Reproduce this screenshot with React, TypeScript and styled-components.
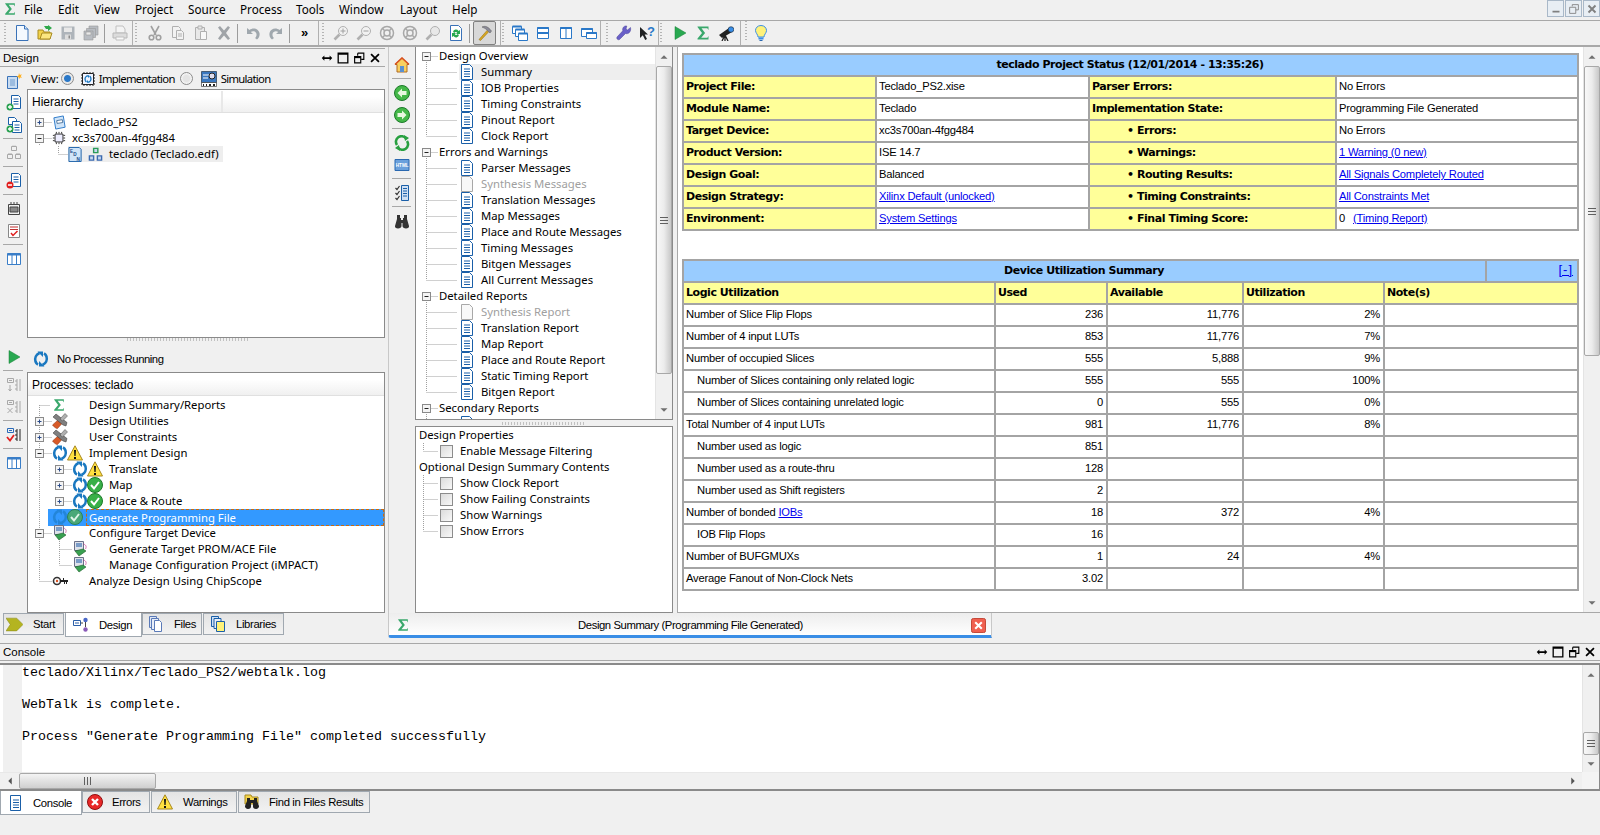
import React from "react";
import styled, { createGlobalStyle } from "styled-components";

const UI = `"Noto Sans", Tahoma, sans-serif`;
const FINE = `"Liberation Sans", Arial, sans-serif`;
const GRIP = `repeating-linear-gradient(to bottom, #b4b4b4 0 1px, transparent 1px 3px)`;

const Global = createGlobalStyle`
  html, body { margin: 0; padding: 0; background: #f0f0f0; overflow: hidden; }
  #root { width: 1600px; height: 835px; }
  * { box-sizing: border-box; }
`;

const Frame = styled.div`
  width: 1600px; height: 835px; display: flex; flex-direction: column;
  background: #f0f0f0; color: #000; font: 11.3px/16px ${UI}; overflow: hidden;
`;
const MenuBar = styled.div`
  height: 21px; flex: none; display: flex; align-items: center; border-bottom: 1px solid #a8a8a8; padding-left: 3px; padding-bottom: 2px;
`;
const LogoSlot = styled.span`display: flex; width: 21px;`;
const MenuItem = styled.span<{ $w: number }>`width: ${p => p.$w}px; font-size: 11.7px;`;
const WinButtons = styled.div`margin-left: auto; display: flex; gap: 1px; padding-right: 0; align-self: flex-start;`;
const WinBtn = styled.div`
  width: 17px; height: 17px; border: 1px solid #a9b8c8; background: #e8eef4; display: flex; align-items: center; justify-content: center; color: #707070;
`;
const ToolBar = styled.div`
  height: 26px; flex: none; display: flex; border-bottom: 2px solid #a8a8a8;
`;
const ToolGroup = styled.div<{ $w: number }>`
  width: ${p => p.$w}px; flex: none; display: flex; align-items: center; border-right: 1px solid #b0b0b0;
`;
const Grip = styled.div<{ $ml: number; $mr: number }>`
  width: 2px; height: 20px; margin: 0 ${p => p.$mr}px 0 ${p => p.$ml}px; background: ${GRIP};
`;
const ToolBtn = styled.div<{ $on?: boolean }>`
  width: 23px; height: 24px; flex: none; display: flex; align-items: center; justify-content: center;
  ${p => p.$on && `border: 1px solid #808080; border-radius: 2px; background: #d8d8d8;`}
`;
const ToolSep = styled.div<{ $l?: number; $r?: number }>`
  width: 1px; height: 19px; flex: none; background: #9c9c9c; margin: 0 ${p => p.$r ?? 3}px 0 ${p => p.$l ?? 2}px;
`;
const Chevrons = styled.span`width: 23px; text-align: center; font: bold 13px/16px "Liberation Sans", sans-serif; flex: none;`;

const Work = styled.div`height: 596px; flex: none; display: flex;`;
const LeftColumn = styled.div`width: 385px; flex: none; display: flex; flex-direction: column; padding-top: 1px;`;
const TitleBar = styled.div`
  height: 19px; flex: none; display: flex; align-items: center; justify-content: space-between;
  border-top: 1px solid #a8a8a8; border-bottom: 1px solid #a8a8a8; padding: 0 3px 0 3px; font: 11.5px/16px ${FINE};
`;
const Controls = styled.div`display: flex; gap: 2px; align-items: center; padding-right: 0;`;
const Dock = styled.div<{ $h: number }>`height: ${p => p.$h}px; flex: none; display: flex;`;
const Strip = styled.div<{ $top?: number; $border?: boolean }>`
  width: 27px; flex: none; display: flex; flex-direction: column; align-items: stretch; padding-top: ${p => p.$top ?? 0}px;
  ${p => p.$border && `border-left: 1px solid #c8c8c8;`}
`;
const StripBtn = styled.div`height: 22px; flex: none; display: flex; align-items: center; justify-content: center;`;
const StripSep = styled.div`height: 1px; flex: none; background: #a8a8a8; margin: 2px 4px 3px 3px;`;
const DockBody = styled.div`flex: 1; min-width: 0; display: flex; flex-direction: column;`;
const ViewRow = styled.div`height: 22px; flex: none; display: flex; align-items: center; padding: 1px 0 0 4px;`;
const ViewText = styled.span<{ $ml?: number; $tight?: boolean }>`
  margin-left: ${p => p.$ml ?? 0}px; ${p => p.$tight && `letter-spacing: -0.7px;`}
`;
const Radio = styled.span<{ $on?: boolean }>`
  width: 13px; height: 13px; border-radius: 50%; flex: none; border: 1px solid #8c8c8c;
  background: ${p => (p.$on ? "radial-gradient(circle, #2a78c8 0 3px, #e8e8e8 4px)" : "radial-gradient(circle, #e4e4e4 0 3px, #f4f4f4 5px)")};
`;
const Pane = styled.div`
  flex: 1; min-height: 0; background: #fff; border: 1px solid #8a8a8a; overflow: hidden; position: relative;
`;
const Header = styled.div`
  height: 23px; display: flex; align-items: center; background: linear-gradient(#fff 0 30%, #f0f0f0); border-bottom: 1px solid #e0e0e0; padding: 1px 0 0 4px; font: 12px/16px ${FINE};
`;
const HeaderCol = styled.div`width: 191px; height: 100%; display: flex; align-items: center; border-right: 2px solid #e8e8e8;`;
const Rows = styled.div<{ $top?: number }>`padding-top: ${p => p.$top ?? 2}px;`;
const Row = styled.div<{ $tone?: string }>`height: 16px; display: flex; align-items: center; white-space: nowrap; color: ${p => p.$tone ?? "#000"};`;
const Slot = styled.span<{ $w: number }>`width: ${p => p.$w}px; flex: none; display: flex; align-items: center;`;
const LightBand = styled.div<{ $w?: number }>`
  display: flex; align-items: center; height: 16px; background: #eeeeee; ${p => (p.$w ? `width: ${p.$w}px;` : `flex: 1;`)}
`;
const SelBand = styled.div`display: flex; align-items: center; height: 17px; flex: 1; background: #3399ff; color: #fff;`;
const FocusLabel = styled.span`flex: 1; outline: 1px dashed #c86a10; outline-offset: -1px; line-height: 17px; height: 17px; padding-left: 3px;`;
const Splitter = styled.div`
  height: 8px; flex: none; display: flex; justify-content: center; align-items: flex-start;
`;
const SplitDots = styled.div`
  width: 122px; height: 3px; margin-right: 10px; background: repeating-linear-gradient(to right, #c0c0c0 0 1px, transparent 1px 3px);
`;
const ProcBar = styled.div`height: 26px; flex: none; display: flex; align-items: center; padding-left: 6px; gap: 8px; font: 11.3px/16px ${FINE}; letter-spacing: -0.45px;`;
const Tabs = styled.div<{ $h?: number; $pl?: number }>`
  display: flex; height: ${p => p.$h ?? 24}px; flex: none; align-items: flex-start; padding-left: ${p => p.$pl ?? 0}px;
`;
const Tab = styled.div<{ $on?: boolean; $w: number; $pad: number; $gap: number }>`
  width: ${p => p.$w}px; flex: none; display: flex; align-items: center; gap: ${p => p.$gap}px; padding-left: ${p => p.$pad}px; white-space: nowrap;
  font: 11.3px/16px ${FINE}; letter-spacing: -0.35px;
  height: ${p => (p.$on ? "100%" : "calc(100% - 2px)")};
  border: 1px solid #a0a8b0; border-top: ${p => (p.$on ? "none" : "1px solid #a0a8b0")};
  background: ${p => (p.$on ? "#fff" : "linear-gradient(#e4e4e4, #f2f2f2)")};
  margin-right: ${p => (p.$on ? 0 : 1)}px;
`;
const RightColumn = styled.div`flex: 1; min-width: 0; display: flex; flex-direction: column; padding-left: 3px;`;
const TopRow = styled.div`height: 566px; flex: none; display: flex;`;
const MidColumn = styled.div`width: 258px; flex: none; display: flex; flex-direction: column;`;
const TreePane = styled.div`
  height: 373px; flex: none; background: #fff; border: 1px solid #8a8a8a; border-top: none; display: flex; overflow: hidden;
`;
const TreeBody = styled.div`flex: 1; min-width: 0; overflow: hidden;`;
const MidGrip = styled.div`height: 6px; flex: none; display: flex; justify-content: center; align-items: center;`;
const MidDots = styled.div`width: 84px; height: 3px; background: repeating-linear-gradient(to right, #c0c0c0 0 1px, transparent 1px 3px);`;
const PropsPane = styled.div`flex: 1; background: #fff; border: 1px solid #8a8a8a;`;
const MainPane = styled.div`
  margin-left: 4px; flex: 1; min-width: 0; background: #fff; border-left: 1px solid #a8a8a8; border-bottom: 1px solid #a8a8a8; display: flex;
`;
const MainBody = styled.div`flex: 1; min-width: 0; padding: 6px 0 0 4px;`;
const EditorTab = styled.div`
  width: 604px; height: 25px; flex: none; display: flex; align-items: center; border: 1px solid #c8c8c8; border-top: none; border-bottom: 3px solid #3a8ee6;
  background: linear-gradient(#ededed, #fff); padding: 2px 5px 0 7px; border-radius: 0 0 0 3px;
`;
const EditorLabel = styled.span`flex: 1; text-align: center; font: 11.3px/16px ${FINE}; letter-spacing: -0.42px;`;
const Scroll = styled.div`
  width: 17px; flex: none; background: #f0f0f0; display: flex; flex-direction: column; border-left: 1px solid #e4e4e4; min-height: 0; overflow: hidden;
`;
const Arrow = styled.div<{ $end?: boolean }>`
  height: 18px; flex: none; display: flex; align-items: center; justify-content: center; ${p => p.$end && `margin-top: auto;`}
`;
const Thumb = styled.div<{ $mt: number; $h: number }>`
  height: ${p => p.$h}px; margin-top: ${p => p.$mt}px; flex: none; display: flex; align-items: center; justify-content: center;
  border: 1px solid #a8a8a8; border-radius: 2px; background: linear-gradient(to right, #f8f8f8, #ececec 50%, #c8c8c8);
`;
const Lines = styled.div`
  width: 8px; height: 7px; border-top: 1px solid #606060; border-bottom: 1px solid #606060;
  background: linear-gradient(#606060, #606060) center/100% 1px no-repeat;
`;

const Table = styled.table<{ $mt?: number }>`
  width: 895px; table-layout: fixed; border-collapse: collapse; margin-top: ${p => p.$mt ?? 0}px; border: 2px solid #8c8c8c; font: 11.2px/16px ${FINE}; letter-spacing: -0.2px;
`;
const Tr = styled.tr`height: 22px;`;
const Cell = styled.td<{ $bg?: string; $b?: boolean; $align?: string; $pad?: number; $rp?: number }>`
  border: 2px solid #a4a4a4; padding: 0 ${p => p.$rp ?? 3}px ${p => (p.$b ? 0 : 2)}px ${p => p.$pad ?? 2}px; white-space: nowrap; overflow: hidden;
  background: ${p => p.$bg ?? "#fff"}; text-align: ${p => p.$align ?? "left"};
  ${p => p.$b && `font-family: "DejaVu Sans", sans-serif; font-weight: bold; font-size: 11px; letter-spacing: -0.45px;`}
`;
const Link = styled.a`color: #0000ee; text-decoration: underline;`;
const TimingLink = styled(Link)`margin-left: 8px;`;
const FoldLink = styled(Link)`font-size: 13px; letter-spacing: 1px;`;

const ConsoleTitle = styled(TitleBar)`height: 18px;`;
const ConsoleBox = styled.div`
  height: 128px; flex: none; margin-top: 2px; border-top: 2px solid #8a8a8a; border-bottom: 2px solid #8a8a8a; border-right: 1px solid #8a8a8a;
  display: grid; grid-template-columns: 1fr 17px; grid-template-rows: minmax(0, 1fr) 17px; background: #fff;
`;
const ConsoleMain = styled.div`display: flex; min-width: 0; padding-left: 3px;`;
const Gutter = styled.div`width: 19px; flex: none; background: #f0f0f0;`;
const Pre = styled.pre`margin: 0; font: 13.33px/16px "Liberation Mono", monospace; color: #000;`;
const HScroll = styled.div`display: flex; align-items: stretch; background: #f0f0f0; border-top: 1px solid #e8e8e8;`;
const HArrow = styled.div<{ $end?: boolean }>`width: 19px; display: flex; align-items: center; justify-content: center; ${p => p.$end && `margin-left: auto;`}`;
const HThumb = styled.div`
  width: 137px; display: flex; align-items: center; justify-content: center; border: 1px solid #a8a8a8; border-radius: 2px;
  background: linear-gradient(#f4f4f4, #cfcfcf);
`;
const VLines = styled.div`
  width: 7px; height: 8px; border-left: 1px solid #606060; border-right: 1px solid #606060;
  background: linear-gradient(#606060, #606060) center/1px 100% no-repeat;
`;
const Corner = styled.div`background: #f4f4f4;`;
const Glyph = styled.svg<{ $s: number }>`width: ${p => p.$s}px; height: ${p => p.$s}px; flex: none; display: block;`;
const GuideSvg = styled.svg`flex: none; display: block;`;
const Check = styled.span`
  width: 13px; height: 13px; flex: none; border: 1px solid #8c8c8c; background: linear-gradient(135deg, #dcdcdc, #f8f8f8);
`;

const docLines = <path d="M5 5h6M5 7.5h6M5 10h6M5 12.5h6" stroke="#1a5fa8" />;
const refreshArrows = (
  <g fill="none" stroke="#1a78c0" strokeWidth="2.600">
    <path d="M6.500 2C3 3.500 1.500 7 2.500 10.500c.5 1.500 1.200 2.500 2.500 3.200" />
    <path d="M9.500 14c3.500-1.500 5-5 4-8.500-.5-1.500-1.200-2.500-2.500-3.200" />
    <path d="M4.500 .5h5.500v5.500zM11.500 15.500H6v-5.500z" fill="#1a78c0" stroke="none" />
  </g>
);
const G: Record<string, React.ReactNode> = {
  sigma: <path d="M2.5 1.5h11v3.5l-1.2-1.8H6.5l3.6 4.8-3.9 4.8h6.2l1.1-1.8v3.5h-11v-1l4.5-5.5-4.5-6z" fill="#3aa86c" />,
  doc: <g><path d="M2.5.5h8l3 3v12h-11z" fill="#fff" stroke="#1a5fa8" />{docLines}</g>,
  docOff: <path d="M2.5.5h8l3 3v12h-11z" fill="#f8f8f8" stroke="#a8a8a8" />,
  newFile: <g><path d="M2.5.5h8l3.5 3.5v11.5H2.5z" fill="#f4f9ff" stroke="#3a72b8" /><path d="M10.5.5V4H14" fill="#d8e8f8" stroke="#3a72b8" /></g>,
  open: <g><path d="M1 5h5l1 2h6v7H1z" fill="#f2d24a" stroke="#a88a20" /><path d="M3 14l2-6h10l-2 6z" fill="#fbe680" stroke="#a88a20" /><path d="M7 1h4V0l4 3-4 3V4H9z" fill="#2fa84a" /></g>,
  save: <g fill="#aeb4ba"><path d="M1.5 1.5h13v13h-13z" /><path d="M4 2.5h8v4.5H4z" fill="#e8e8e8" /><path d="M5 9.5h6v5H5z" fill="#dcdcdc" /><path d="M8.5 10.5h1.5v3H8.5z" fill="#8a8a8a" /></g>,
  saveAll: <g fill="#b8bcc2" stroke="#989898" strokeWidth=".6"><path d="M6 1h9v9H6z" /><path d="M3.5 3.500h9v9h-9z" /><path d="M1 6h9v9H1z" /><path d="M3 7h5v3H3z" fill="#e8e8e8" /></g>,
  print: <g><path d="M4 1h7l2 3v4H4z" fill="#f4f4f4" stroke="#c0c0c0" /><path d="M1 8h14v5H1z" fill="#dcdcdc" stroke="#b8b8b8" /><path d="M4 12h8v3H4z" fill="#f8f8f8" stroke="#c0c0c0" /></g>,
  cut: <g fill="none" stroke="#a0a0a0" strokeWidth="1.600"><path d="M4 1l5 9M12 1L7 10" /><circle cx="4.500" cy="12.500" r="2.300" /><circle cx="11.500" cy="12.500" r="2.300" /></g>,
  copy: <g fill="#f2f2f2" stroke="#b0b0b0"><path d="M2.5 1.500h6l2 2v9h-8z" /><path d="M6.500 5.500h5l2 2v7h-7z" /><path d="M8 9h4M8 11h4" /></g>,
  paste: <g fill="#e8e8e8" stroke="#b0b0b0"><path d="M2.500 2.500h9v12h-9z" /><path d="M5 1h4v3H5z" /><path d="M7.500 6.500h6v8h-6z" fill="#f8f8f8" /></g>,
  del: <path d="M2 2.500L4 1l4 4.500L12 1l2 1.500L10 8l4 5.500-2 1.500-4-4.500L4 15l-2-1.500L6 8z" fill="#a0a4a8" />,
  undo: <path d="M2 3v6h6L5.800 7C7.500 5.500 11 6 11.500 9c.2 1.500-.3 3-1.500 4l2 1.500c2-1.500 3-4 2.500-6.500C13.500 3.500 8 2 4.500 5z" fill="#a0a8ae" />,
  redo: <path d="M14 3v6H8l2.200-2C8.500 5.500 5 6 4.500 9c-.2 1.500.3 3 1.500 4L4 14.500C2 13 1 10.500 1.500 8 2.500 3.500 8 2 11.500 5z" fill="#a0a8ae" />,
  zoomIn: <g><path d="M1.500 14.500L6.500 9.500" stroke="#b0b0b0" strokeWidth="2.600" /><circle cx="10" cy="6" r="4.500" fill="#f2f2f2" stroke="#b0b0b0" /><path d="M10 3.500v5M7.500 6h5" stroke="#a0a0a0" /></g>,
  zoomOut: <g><path d="M1.500 14.500L6.500 9.500" stroke="#b0b0b0" strokeWidth="2.600" /><circle cx="10" cy="6" r="4.500" fill="#f2f2f2" stroke="#b0b0b0" /><path d="M7.500 6h5" stroke="#a0a0a0" /></g>,
  ring: <g fill="none" stroke="#a8a8a8"><circle cx="8" cy="8" r="6.500" strokeWidth="1.500" /><circle cx="8" cy="8" r="3" strokeWidth="1.500" /><path d="M3.500 3.500l2.500 2.500M12.500 3.500L10 6M3.500 12.500L6 10M12.500 12.500L10 10" strokeWidth="1.500" /></g>,
  zoomPlain: <g><path d="M1.500 14.500L6.500 9.500" stroke="#b0b0b0" strokeWidth="2.600" /><circle cx="10" cy="6" r="4.500" fill="#e8e8e8" stroke="#b0b0b0" /></g>,
  refreshDoc: <g><path d="M2.500.5h8l3 3v12h-11z" fill="#fff" stroke="#3a72b8" /><path d="M5 7a3 3 0 0 1 5.500-1L12 5v4H8l1.200-1.200A1.500 1.500 0 0 0 6.500 8z" fill="#28a850" /><path d="M11 10a3 3 0 0 1-5.500 1L4 12V8h4L6.800 9.200A1.500 1.500 0 0 0 9.500 9z" fill="#28a850" /></g>,
  hammer: <g><path d="M2 14.500L10 5.500l1.500 1.500-8 8.500z" fill="#d8a820" stroke="#98741a" strokeWidth=".6" /><path d="M5 2c3-1.500 6-.5 9.500 4L13 8 10 5C8.500 3.500 7 3 5 2z" fill="#8a8a98" stroke="#666" strokeWidth=".6" /></g>,
  win1: <g fill="#fff" stroke="#2a78c8"><path d="M.5 1.500h9v7h-9z" /><path d="M3.500 4.500h9v7h-9z" /><path d="M6.500 8.500h9v7h-9z" /><path d="M.5 1.500h9M3.500 4.500h9M6.500 8.500h9" strokeWidth="2" /></g>,
  win2: <g fill="#fff" stroke="#2a78c8"><path d="M2.500 2.500h11v11h-11z" /><path d="M2.500 3h11M2.500 8h11" strokeWidth="2" /></g>,
  win3: <g fill="#fff" stroke="#2a78c8"><path d="M2.500 2.500h11v11h-11z" /><path d="M2.500 3h11" strokeWidth="2" /><path d="M8 3v10" /></g>,
  win4: <g fill="#fff" stroke="#2a78c8"><path d="M.5 3.500h11v8H.5z" /><path d="M.5 4h11" strokeWidth="2" /><path d="M5.500 7.500h10v6h-10z" /><path d="M5.500 8h10" strokeWidth="2" /></g>,
  wrench: <path d="M14.500 2.500L11.500 5l-1.500-1 .8-3C8 .5 6 3 6.800 5.800L1 12c-1 1.500 1 3.500 2.500 2.500L9.500 8.500C12.500 9.500 15.500 6.500 14.500 2.500z" fill="#6a60c8" stroke="#4a4498" strokeWidth=".5" />,
  help: <g><path d="M1 2v11l2.800-2.800 2.400 4.800 1.800-1-2.300-4.500H9z" fill="#222" /><text x="8" y="10.500" fontSize="13" fontWeight="bold" fill="#2a78c8" fontFamily="Liberation Sans">?</text></g>,
  play: <path d="M3 1.500l11 6.500-11 6.500z" fill="#28a850" stroke="#1a8038" strokeWidth=".5" />,
  scope: <g><path d="M1 10L11 3l3 4L4 13z" fill="#222" /><circle cx="13" cy="4.500" r="2.800" fill="#3a8ee6" stroke="#123" strokeWidth=".6" /><path d="M7 10l-3 6M7 10l3 6M7 10v6" stroke="#222" strokeWidth="1.300" /></g>,
  bulb: <g><path d="M8 .5c3.500 0 5.500 2.500 5.500 5 0 2.500-2.500 4-2.500 6.500H5C5 9.500 2.500 8 2.500 5.500 2.500 3 4.500.5 8 .5z" fill="#fff27a" stroke="#3a8ee6" /><path d="M5.500 12.500h5v2h-5z" fill="#3a8ee6" /><path d="M6.500 15h3v1h-3z" fill="#2a68b0" /></g>,
  refresh: refreshArrows,
  warn: <g><path d="M8 .8L15.500 15H.5z" fill="#ffe040" stroke="#a88820" strokeLinejoin="round" /><path d="M7 5h2l-.4 6H7.400zM7 12h2v2H7z" fill="#111" /></g>,
  ok: <g><circle cx="8" cy="8" r="7.500" fill="#38b048" stroke="#1c7a2a" /><path d="M4 8l3 3.500 5-6.500" fill="none" stroke="#fff" strokeWidth="2" /></g>,
  okDim: <g><circle cx="8" cy="8" r="7.500" fill="#4aa878" stroke="#2a8058" /><path d="M4 8l3 3.500 5-6.500" fill="none" stroke="#e0f4e8" strokeWidth="2" /></g>,
  refreshDim: <g opacity=".6">{refreshArrows}</g>,
  tools: <g><path d="M.5 12l6-5.500 4 3.500-5 5.500c-1 .5-4-2-5-3.500z" fill="#d85a28" stroke="#8a3010" strokeWidth=".5" /><path d="M1 4l3-3 11 8.500-1 3.500-3-1z" fill="#808080" stroke="#333" strokeWidth=".5" /><path d="M8 6l5-5.500 2.500 2.500-5 5z" fill="#b0b0b0" stroke="#444" strokeWidth=".5" /></g>,
  config: <g><path d="M2.500 .5h9v9h-9z" fill="#dfe2ea" stroke="#6a7088" /><path d="M4 2h6v4H4z" fill="#7a9cc8" /><path d="M3 10l4 5 7-5-3-2z" fill="#38a050" stroke="#20602c" strokeWidth=".6" /><path d="M11.500 3c3 1 3 3 2 5" fill="none" stroke="#c83a90" strokeWidth=".7" /></g>,
  key: <g><circle cx="5" cy="8" r="3.500" fill="#fff" stroke="#333" strokeWidth="1.600" /><circle cx="5" cy="8" r="1.200" fill="#d85020" /><path d="M8 7h8v2h-1v2h-1V9h-1v2h-1V9H8zM12 5v2h-1V5z" fill="#222" /></g>,
  chip: <g><path d="M3.500 3.500h9v9h-9z" fill="#eef" stroke="#222" /><path d="M1 5h2M1 8h2M1 11h2M13 5h2M13 8h2M13 11h2M5 1v2M8 1v2M11 1v2M5 13v2M8 13v2M11 13v2" stroke="#222" /></g>,
  chipRefresh: <g><path d="M2.500 2.500h11v11h-11z" fill="#f0f4ff" stroke="#222" /><path d="M1 4h1M1 7h1M1 10h1M1 13h1M14 4h1M14 7h1M14 10h1M14 13h1M4 1v1M7 1v1M10 1v1M13 1v1M4 14v1M7 14v1M10 14v1M13 14v1" stroke="#222" /><g transform="translate(4 4) scale(.5)">{refreshArrows}</g></g>,
  sim: <g><path d="M.5.5h15v11H.5z" fill="#3a78c0" stroke="#123" strokeWidth=".6" /><path d="M2 4h6M2 7h5" stroke="#fff" /><circle cx="11" cy="5" r="3" fill="#dde" stroke="#222" /><path d="M.5 11.500h15v4H.5z" fill="#fff" stroke="#222" strokeWidth=".6" /><path d="M2 13h1v2H2zM5 13h1v2H5zM8 13h2v2H8zM12 13h2v2h-2z" fill="#222" /></g>,
  project: <g><path d="M2 3l10-2 2 12-10 2z" fill="#cfe4f8" stroke="#2a78c8" /><path d="M5 6l6-1 .5 3-6 1z" fill="#fff" stroke="#2a5888" strokeWidth=".8" /></g>,
  edif: <g><path d="M1 .5h11l2 2v13H1z" fill="#cfe4f8" stroke="#1a5fa8" /><text x="2" y="6" fontSize="5" fontWeight="bold" fill="#1a4a88" fontFamily="Liberation Sans">E</text><text x="5.500" y="10" fontSize="5" fontWeight="bold" fill="#1a4a88" fontFamily="Liberation Sans">D</text><text x="9" y="14.500" fontSize="5" fontWeight="bold" fill="#1a4a88" fontFamily="Liberation Sans">N</text></g>,
  blocks: <g fill="#c8d8f0" stroke="#3a6ab0" strokeWidth="1.500"><path d="M6 1.500h4.500V6H6z" stroke="#2a9a58" /><path d="M1.500 9.500H6V14H1.500zM10 9.500h4.500V14H10z" /></g>,
  sparkle: <g><path d="M1.500 3.500h10v12h-10z" fill="#c8dcf2" stroke="#3a72b8" /><path d="M4 6h5v7H4z" fill="#9cbce0" /><path d="M13 0l.8 2 2-.8-1 2 1.200 1.500-2-.2-1 1.800-.4-2-2-.5 1.800-1z" fill="#ffb020" /></g>,
  add1: <g><path d="M5.500.5h7l2 2v11h-9z" fill="#fff" stroke="#1a5fa8" /><path d="M7.500 4h5M7.500 6.500h5M7.500 9h5" stroke="#1a5fa8" /><circle cx="4" cy="12" r="3.500" fill="#28a050" /><path d="M2 12h4M4 10v4" stroke="#fff" strokeWidth="1.300" /></g>,
  add2: <g><path d="M2.500.5h6l2 2v5h-8z" fill="#fff" stroke="#1a5fa8" /><path d="M6.500 4.500h7l2 2v9h-9z" fill="#fff" stroke="#1a5fa8" /><path d="M8.500 8h5M8.500 10.500h5M8.500 13h5" stroke="#1a5fa8" /><circle cx="4" cy="12" r="3.500" fill="#28a050" /><path d="M2 12h4M4 10v4" stroke="#fff" strokeWidth="1.300" /></g>,
  chipsGray: <g fill="none" stroke="#a8a8a8"><path d="M5.500 1.500h5v4h-5zM1.500 9.500h5v4h-5zM9.500 9.500h5v4h-5z" /><path d="M3 8v1.500M5 8v1.500M11 8v1.500M13 8v1.500M7 .5v1M9 .5v1" /></g>,
  remove: <g><path d="M5.500.5h7l2 2v11h-9z" fill="#fff" stroke="#1a5fa8" /><path d="M7.500 4h5M7.500 6.500h5M7.500 9h5" stroke="#1a5fa8" /><circle cx="4" cy="12" r="3.500" fill="#e02020" /><path d="M2 12h4" stroke="#fff" strokeWidth="1.500" /></g>,
  chipDark: <g fill="#eee" stroke="#444"><path d="M2.500 3.500h11v10h-11z" /><path d="M4 6h8v5H4z" fill="#888" /><path d="M5 1v2M8 1v2M11 1v2" /></g>,
  report: <g><path d="M2.500 1.500h11v13h-11z" fill="#fff" stroke="#888" /><path d="M4 4h8M4 6.500h8" stroke="#c03030" /><path d="M5 10l2 2.500L11.500 8" fill="none" stroke="#e02020" strokeWidth="1.500" /></g>,
  table: <g fill="#fff" stroke="#3a7ec8"><path d="M1.500 2.500h13v11h-13z" /><path d="M1.500 3.500h13" strokeWidth="2" /><path d="M6 4v9M10.500 4v9" /></g>,
  procGray1: <g fill="none" stroke="#a8a8a8"><path d="M1.500 1.500h6v4h-6zM3 3.500h3" /><path d="M11 2v12M14 2v12M9 4h2M9 8h2M9 12h2" /><path d="M4 8v6M2.500 12L4 14l1.500-2" /></g>,
  procGray2: <g fill="none" stroke="#a8a8a8"><path d="M1.500 1.500h6v4h-6zM3 3.500h3" /><path d="M11 2v12M14 2v12M9 4h2M9 8h2M9 12h2" /><path d="M1.500 9l5 5M6.500 9l-5 5" /></g>,
  procCheck: <g fill="none"><path d="M1.500 1.500h6v4h-6z" stroke="#2a6ab8" /><path d="M3 3.500h3" stroke="#2a6ab8" /><path d="M11 2v12M14 2v12M9 4h2M9 8h2M9 12h2" stroke="#222" /><path d="M1 10l3 3.500L8 8" stroke="#e02020" strokeWidth="1.800" /></g>,
  home: <g><path d="M8 1L1 7.500h2V15h10V7.500h2z" fill="#f8d060" stroke="#b06a20" /><path d="M1 7.500L8 1l7 6.500" fill="none" stroke="#d85020" strokeWidth="1.600" /><path d="M6 9h4v6H6z" fill="#5a90d0" /></g>,
  greenL: <g><circle cx="8" cy="8" r="7.500" fill="#44b848" stroke="#1c7a2a" /><path d="M8 3.500L3.500 8 8 12.500V10h4.500V6H8z" fill="#e8f8e0" /></g>,
  greenR: <g><circle cx="8" cy="8" r="7.500" fill="#44b848" stroke="#1c7a2a" /><path d="M8 3.500L12.500 8 8 12.500V10H3.500V6H8z" fill="#e8f8e0" /></g>,
  greenRe: <g fill="none" stroke="#28a040" strokeWidth="2.600"><path d="M3 10a5.500 5.500 0 0 1 9-6.500" /><path d="M13 6a5.500 5.500 0 0 1-9 6.500" /><path d="M10 0l5 3-4 3zM6 16l-5-3 4-3z" fill="#28a040" stroke="none" /></g>,
  html: <g><path d="M1 2.500h14v11H1z" fill="#6aa0dc" stroke="#2a68b0" /><text x="1.800" y="10.200" fontSize="4.600" fontWeight="bold" fill="#fff" fontFamily="Liberation Sans">HTML</text></g>,
  list: <g><path d="M1.500 3l1.500 1.500L5.500 1M1.500 8l1.500 1.500L5.500 6M1.500 13l1.500 1.500L5.500 11" fill="none" stroke="#333" strokeWidth="1.200" /><path d="M7.500 .5h7v15h-7z" fill="#cfe0f4" stroke="#1a5fa8" /><path d="M9 3.500h4M9 6h4M9 8.500h4M9 11h4" stroke="#1a5fa8" /></g>,
  binoc: <g fill="#333"><path d="M3 2h3v3h1v2h2V5h1V2h3v4l2 7c.3 1.500-1 2.500-3 2.500s-3.500-1-3.500-2.500V10H7.500v3c0 1.500-1.500 2.500-3.500 2.500S.7 14.500 1 13l2-7z" /></g>,
  find: <g><path d="M1 1h6l1 2h6v7H1z" fill="#f2d24a" stroke="#a88a20" /><path d="M3 4h3v2h4V4h3v3l2 5c.2 1.500-1 3-3 3s-3-1-3-2.500V9H7v3.500C7 14 6 15 4 15s-3.200-1.500-3-3l2-5z" fill="#222" /></g>,
  start: <path d="M0 2h10l6 6-6 6H0l4-6z" fill="#b4b420" stroke="#88881c" strokeWidth=".5" />,
  design: <g><path d="M.5 3.500h7v5h-7z" fill="#fff" stroke="#2a5ea8" /><path d="M2 6h4" stroke="#2a5ea8" /><circle cx="12.500" cy="3" r="2.200" fill="#4a68c8" /><circle cx="12.500" cy="12.500" r="2.200" fill="#8a5ab8" /><path d="M7.500 6h2.500M12.500 5v5" stroke="#444" /></g>,
  files: <g fill="#fff" stroke="#5a7ab8"><path d="M1.500 .5h7v11h-7z" fill="#dde6f4" /><path d="M3.500 2.500h7v11h-7z" fill="#e8eef8" /><path d="M6.500 4.500h5l2 2v9h-7z" /></g>,
  libs: <g stroke="#1a5fa8"><path d="M1.500 .5h7v10h-7z" fill="#cfe0f4" /><path d="M4 2.500h7v10H4z" fill="#e8eef8" /><path d="M6.500 5.500h8v10h-8z" fill="#fff27a" /></g>,
  err: <g><circle cx="8" cy="8" r="7.500" fill="#e82828" stroke="#901010" /><path d="M5 5l6 6M11 5l-6 6" stroke="#fff" strokeWidth="2.400" /></g>,
  consoleDoc: <g><path d="M2.500.5h10v15h-10z" fill="#fff" stroke="#1a5fa8" />{docLines}</g>,
  close: <g><rect x=".5" y=".5" width="15" height="15" rx="2" fill="#f06050" stroke="#c04030" /><path d="M4.500 4.500l7 7M11.500 4.500l-7 7" stroke="#fff" strokeWidth="2.200" /></g>,
  up: <path d="M4 11l4-4 4 4z" fill="#707070" />,
  down: <path d="M4 6h8l-4 4z" fill="#707070" />,
  left: <path d="M10 4v8L6 8z" fill="#555" />,
  right: <path d="M6 4v8l4-4z" fill="#555" />,
  resize: <path d="M2 8l3-3v2h6V5l3 3-3 3V9H5v2z" fill="#000" />,
  max: <path d="M2.500 2.500h11v11h-11z M2.500 3.500h11" fill="none" stroke="#000" strokeWidth="1.500" />,
  restore: <g fill="none" stroke="#000" strokeWidth="1.300"><path d="M6.500 2.500h7v7h-3M6.500 2.500v3" /><path d="M3 6.500h7v7H3z" /><path d="M3 7.500h7" /></g>,
  xMark: <path d="M3.500 3.500l9 9M12.500 3.500l-9 9" stroke="#000" strokeWidth="2" />,
  min: <path d="M4 11h8" stroke="#808080" strokeWidth="2" />,
  winRestore: <g fill="none" stroke="#808080"><path d="M6 3h7v6h-3M6 3v2" /><path d="M3 6h7v7H3z" /></g>,
  winClose: <path d="M4 4l8 8M12 4l-8 8" stroke="#808080" strokeWidth="2.200" />,
};

const Ico = ({ n, s = 16 }: { n: string; s?: number }) => (
  <Glyph $s={s} viewBox="0 0 16 16">{G[n]}</Glyph>
);

type GuideProps = { w: number; through?: number[]; elbow?: number; to?: number; last?: boolean; first?: boolean; box?: "+" | "-"; boxAt?: number; drop?: boolean; h?: number };
const Guide = ({ w, through = [], elbow, to, last, first, box, boxAt, drop, h = 16 }: GuideProps) => {
  const at = boxAt ?? elbow ?? 0;
  return (
    <GuideSvg width={w} height={h} viewBox={`0 0 ${w} ${h}`}>
      <g stroke="#a0a0a0" strokeDasharray="1 1" fill="none">
        {through.map(x => <path key={x} d={`M${x} 0V${h}`} />)}
        {elbow !== undefined && <path d={`M${elbow} ${first ? 8 : 0}V${last ? 8 : h}`} />}
        {elbow !== undefined && to !== undefined && <path d={`M${elbow} 8.500H${to}`} />}
        {drop && <path d={`M${at} 8V${h}`} />}
        {box && to !== undefined && <path d={`M${at} 8.500H${to}`} />}
      </g>
      {box && (
        <g>
          <rect x={at - 4} y="4.500" width="8" height="8" fill="#f4f4f4" stroke="#8a8a8a" />
          <path d={`M${at - 2} 8.500h4`} stroke={box === "-" ? "#222" : "#2a4a88"} />
          {box === "+" && <path d={`M${at} 6.500v4`} stroke="#2a4a88" />}
        </g>
      )}
    </GuideSvg>
  );
};

const menu: [string, number][] = [["File", 34], ["Edit", 36], ["View", 41], ["Project", 53], ["Source", 52], ["Process", 56], ["Tools", 43], ["Window", 61], ["Layout", 52], ["Help", 40]];

const Panel = () => (
  <Controls>
    <Ico n="resize" s={14} /><Ico n="max" s={14} /><Ico n="restore" s={14} /><Ico n="xMark" s={14} />
  </Controls>
);

const treeGroups: { title: string; items: [string, boolean?][] }[] = [
  { title: "Design Overview", items: [["Summary"], ["IOB Properties"], ["Timing Constraints"], ["Pinout Report"], ["Clock Report"]] },
  { title: "Errors and Warnings", items: [["Parser Messages"], ["Synthesis Messages", true], ["Translation Messages"], ["Map Messages"], ["Place and Route Messages"], ["Timing Messages"], ["Bitgen Messages"], ["All Current Messages"]] },
  { title: "Detailed Reports", items: [["Synthesis Report", true], ["Translation Report"], ["Map Report"], ["Place and Route Report"], ["Static Timing Report"], ["Bitgen Report"]] },
  { title: "Secondary Reports", items: [["WebTalk Report"]] },
];

const status: [string, React.ReactNode, string, React.ReactNode, number?][] = [
  ["Project File:", "Teclado_PS2.xise", "Parser Errors:", "No Errors", 2],
  ["Module Name:", "Teclado", "Implementation State:", "Programming File Generated", 2],
  ["Target Device:", "xc3s700an-4fgg484", "• Errors:", "No Errors", 37],
  ["Product Version:", "ISE 14.7", "• Warnings:", <Link>1 Warning (0 new)</Link>, 37],
  ["Design Goal:", "Balanced", "• Routing Results:", <Link>All Signals Completely Routed</Link>, 37],
  ["Design Strategy:", <Link>Xilinx Default (unlocked)</Link>, "• Timing Constraints:", <Link>All Constraints Met</Link>, 37],
  ["Environment:", <Link>System Settings</Link>, "• Final Timing Score:", <>0<TimingLink>(Timing Report)</TimingLink></>, 37],
];

const util: [React.ReactNode, number, string, string, string][] = [
  ["Number of Slice Flip Flops", 2, "236", "11,776", "2%"],
  ["Number of 4 input LUTs", 2, "853", "11,776", "7%"],
  ["Number of occupied Slices", 2, "555", "5,888", "9%"],
  ["Number of Slices containing only related logic", 13, "555", "555", "100%"],
  ["Number of Slices containing unrelated logic", 13, "0", "555", "0%"],
  ["Total Number of 4 input LUTs", 2, "981", "11,776", "8%"],
  ["Number used as logic", 13, "851", "", ""],
  ["Number used as a route-thru", 13, "128", "", ""],
  ["Number used as Shift registers", 13, "2", "", ""],
  [<>Number of bonded <Link>IOBs</Link></>, 2, "18", "372", "4%"],
  ["IOB Flip Flops", 13, "16", "", ""],
  ["Number of BUFGMUXs", 2, "1", "24", "4%"],
  ["Average Fanout of Non-Clock Nets", 2, "3.02", "", ""],
];

const YEL = "#ffff99";
const BLU = "#99ccff";

export default function App() {
  return (
    <Frame>
      <Global />
      <MenuBar>
        <LogoSlot><Ico n="sigma" s={14} /></LogoSlot>
        {menu.map(([m, w]) => <MenuItem key={m} $w={w}>{m}</MenuItem>)}
        <WinButtons>
          <WinBtn><Ico n="min" s={14} /></WinBtn><WinBtn><Ico n="winRestore" s={14} /></WinBtn><WinBtn><Ico n="winClose" s={14} /></WinBtn>
        </WinButtons>
      </MenuBar>
      <ToolBar>
        <ToolGroup $w={133}>
          <Grip $ml={4} $mr={4} />
          {["newFile", "open", "save", "saveAll"].map(n => <ToolBtn key={n}><Ico n={n} /></ToolBtn>)}
          <ToolSep />
          <ToolBtn><Ico n="print" /></ToolBtn>
        </ToolGroup>
        <ToolGroup $w={186}>
          <Grip $ml={2} $mr={6} />
          {["cut", "copy", "paste", "del"].map(n => <ToolBtn key={n}><Ico n={n} /></ToolBtn>)}
          <ToolSep />
          <ToolBtn><Ico n="undo" /></ToolBtn><ToolBtn><Ico n="redo" /></ToolBtn>
          <ToolSep />
          <Chevrons>»</Chevrons>
        </ToolGroup>
        <ToolGroup $w={182}>
          <Grip $ml={3} $mr={5} />
          {["zoomIn", "zoomOut", "ring", "ring", "zoomPlain", "refreshDoc"].map((n, i) => <ToolBtn key={i}><Ico n={n} /></ToolBtn>)}
          <ToolSep />
          <ToolBtn $on><Ico n="hammer" /></ToolBtn>
        </ToolGroup>
        <ToolGroup $w={100}>
          <Grip $ml={1} $mr={4} />
          {["win1", "win2", "win3", "win4"].map(n => <ToolBtn key={n}><Ico n={n} /></ToolBtn>)}
        </ToolGroup>
        <ToolGroup $w={58}>
          <Grip $ml={5} $mr={4} />
          <ToolBtn><Ico n="wrench" /></ToolBtn><ToolBtn><Ico n="help" /></ToolBtn>
        </ToolGroup>
        <ToolGroup $w={82}>
          <Grip $ml={1} $mr={6} />
          {["play", "sigma", "scope"].map(n => <ToolBtn key={n}><Ico n={n} /></ToolBtn>)}
        </ToolGroup>
        <Grip $ml={4} $mr={2} />
        <ToolBtn><Ico n="bulb" /></ToolBtn>
      </ToolBar>
      <Work>
        <LeftColumn>
          <TitleBar>Design<Panel /></TitleBar>
          <Dock $h={271}>
            <Strip $top={3}>
              <StripBtn><Ico n="sparkle" /></StripBtn><StripBtn><Ico n="add1" /></StripBtn><StripBtn><Ico n="add2" /></StripBtn>
              <StripSep />
              <StripBtn><Ico n="chipsGray" /></StripBtn>
              <StripSep />
              <StripBtn><Ico n="remove" /></StripBtn>
              <StripSep />
              <StripBtn><Ico n="chipDark" /></StripBtn><StripBtn><Ico n="report" /></StripBtn>
              <StripSep />
              <StripBtn><Ico n="table" /></StripBtn>
            </Strip>
            <DockBody>
              <ViewRow>
                View:<ViewText $ml={2} /><Radio $on /><ViewText $ml={6} /><Ico n="chipRefresh" /><ViewText $ml={3} $tight>Implementation</ViewText>
                <ViewText $ml={5} /><Radio /><ViewText $ml={8} /><Ico n="sim" /><ViewText $ml={4} $tight>Simulation</ViewText>
              </ViewRow>
              <Pane>
                <Header><HeaderCol>Hierarchy</HeaderCol></Header>
                <Rows $top={1}>
                  <Row><Guide w={24} box="+" boxAt={11.5} to={24} /><Slot $w={21}><Ico n="project" s={15} /></Slot>Teclado_PS2</Row>
                  <Row><Guide w={24} box="-" boxAt={11.5} to={24} drop /><Slot $w={20}><Ico n="chip" s={14} /></Slot>xc3s700an-4fgg484</Row>
                  <Row>
                    <Guide w={40} elbow={30.5} to={40} last />
                    <LightBand $w={155}>
                      <Slot $w={20}><Ico n="edif" s={15} /></Slot><Slot $w={21}><Ico n="blocks" s={15} /></Slot>teclado (Teclado.edf)
                    </LightBand>
                  </Row>
                </Rows>
              </Pane>
            </DockBody>
          </Dock>
          <Splitter><SplitDots /></Splitter>
          <Dock $h={267}>
            <Strip>
              <StripBtn><Ico n="play" /></StripBtn>
              <StripSep />
              <StripBtn><Ico n="procGray1" /></StripBtn><StripBtn><Ico n="procGray2" /></StripBtn>
              <StripSep />
              <StripBtn><Ico n="procCheck" /></StripBtn>
              <StripSep />
              <StripBtn><Ico n="table" /></StripBtn>
            </Strip>
            <DockBody>
              <ProcBar><Ico n="refresh" />No Processes Running</ProcBar>
              <Pane>
                <Header>Processes: teclado</Header>
                <Rows $top={1}>
                  <Row><Guide w={24} elbow={11.5} to={22} first /><Slot $w={37}><Ico n="sigma" s={14} /></Slot>Design Summary/Reports</Row>
                  <Row><Guide w={24} through={[11.5]} box="+" boxAt={11.5} to={24} /><Slot $w={37}><Ico n="tools" /></Slot>Design Utilities</Row>
                  <Row><Guide w={24} through={[11.5]} box="+" boxAt={11.5} to={24} /><Slot $w={37}><Ico n="tools" /></Slot>User Constraints</Row>
                  <Row><Guide w={24} through={[11.5]} box="-" boxAt={11.5} to={24} /><Slot $w={15}><Ico n="refresh" /></Slot><Slot $w={22}><Ico n="warn" /></Slot>Implement Design</Row>
                  {([["Translate", "warn"], ["Map", "ok"], ["Place & Route", "ok"]] as [string, string][]).map(([t, k]) => (
                    <Row key={t}><Guide w={44} through={[11.5]} box="+" boxAt={31.5} to={44} /><Slot $w={15}><Ico n="refresh" /></Slot><Slot $w={22}><Ico n={k} /></Slot>{t}</Row>
                  ))}
                  <Row>
                    <Guide w={20} through={[11.5]} />
                    <SelBand>
                      <Slot $w={4} /><Slot $w={15}><Ico n="refreshDim" /></Slot><Slot $w={19}><Ico n="okDim" /></Slot>
                      <FocusLabel>Generate Programming File</FocusLabel>
                    </SelBand>
                  </Row>
                  <Row><Guide w={24} through={[11.5]} box="-" boxAt={11.5} to={24} /><Slot $w={37}><Ico n="config" /></Slot>Configure Target Device</Row>
                  <Row><Guide w={44} through={[11.5]} elbow={31.5} to={44} /><Slot $w={37}><Ico n="config" /></Slot>Generate Target PROM/ACE File</Row>
                  <Row><Guide w={44} through={[11.5]} elbow={31.5} to={44} last /><Slot $w={37}><Ico n="config" /></Slot>Manage Configuration Project (iMPACT)</Row>
                  <Row><Guide w={24} elbow={11.5} to={24} last /><Slot $w={37}><Ico n="key" /></Slot>Analyze Design Using ChipScope</Row>
                </Rows>
              </Pane>
            </DockBody>
          </Dock>
          <Tabs $pl={3}>
            <Tab $w={61} $pad={2} $gap={10}><Ico n="start" s={17} />Start</Tab>
            <Tab $on $w={77} $pad={7} $gap={10}><Ico n="design" />Design</Tab>
            <Tab $w={60} $pad={5} $gap={10}><Ico n="files" />Files</Tab>
            <Tab $w={81} $pad={6} $gap={10}><Ico n="libs" />Libraries</Tab>
          </Tabs>
        </LeftColumn>
        <RightColumn>
          <TopRow>
            <Strip $top={7} $border>
              <StripBtn><Ico n="home" /></StripBtn>
              <StripSep />
              <StripBtn><Ico n="greenL" /></StripBtn><StripBtn><Ico n="greenR" /></StripBtn>
              <StripSep />
              <StripBtn><Ico n="greenRe" /></StripBtn><StripBtn><Ico n="html" /></StripBtn>
              <StripSep />
              <StripBtn><Ico n="list" /></StripBtn>
              <StripSep />
              <StripBtn><Ico n="binoc" /></StripBtn>
            </Strip>
            <MidColumn>
              <TreePane>
                <TreeBody>
                  <Rows $top={1}>
                    {treeGroups.map(g => (
                      <React.Fragment key={g.title}>
                        <Row><Guide w={23} box="-" boxAt={10.5} to={22} drop />{g.title}</Row>
                        {g.items.map(([t, off], i) => (
                          <Row key={t} $tone={off ? "#a0a0a0" : undefined}>
                            <Guide w={43} elbow={10.5} to={41} last={i === g.items.length - 1} />
                            {t === "Summary" ? (
                              <LightBand><Slot $w={22}><Ico n="doc" /></Slot>{t}</LightBand>
                            ) : (
                              <><Slot $w={22}><Ico n={off ? "docOff" : "doc"} /></Slot>{t}</>
                            )}
                          </Row>
                        ))}
                      </React.Fragment>
                    ))}
                  </Rows>
                </TreeBody>
                <Scroll>
                  <Arrow><Ico n="up" s={14} /></Arrow>
                  <Thumb $mt={1} $h={308}><Lines /></Thumb>
                  <Arrow $end><Ico n="down" s={14} /></Arrow>
                </Scroll>
              </TreePane>
              <MidGrip><MidDots /></MidGrip>
              <PropsPane>
                <Rows $top={0}>
                  <Row><Slot $w={3} />Design Properties</Row>
                  <Row><Guide w={24} elbow={7.5} to={22} last /><Slot $w={20}><Check /></Slot>Enable Message Filtering</Row>
                  <Row><Slot $w={3} />Optional Design Summary Contents</Row>
                  {["Show Clock Report", "Show Failing Constraints", "Show Warnings", "Show Errors"].map((t, i) => (
                    <Row key={t}><Guide w={24} elbow={7.5} to={22} last={i === 3} /><Slot $w={20}><Check /></Slot>{t}</Row>
                  ))}
                </Rows>
              </PropsPane>
            </MidColumn>
            <MainPane>
              <MainBody>
                <Table>
                  <colgroup><col width={193} /><col width={213} /><col width={247} /><col width={242} /></colgroup>
                  <tbody>
                    <Tr><Cell colSpan={4} $bg={BLU} $b $align="center">teclado Project Status (12/01/2014 - 13:35:26)</Cell></Tr>
                    {status.map(([a, b, c, d, pad]) => (
                      <Tr key={a}>
                        <Cell $bg={YEL} $b>{a}</Cell><Cell>{b}</Cell>
                        <Cell $bg={YEL} $b $pad={pad}>{c}</Cell><Cell>{d}</Cell>
                      </Tr>
                    ))}
                  </tbody>
                </Table>
                <Table $mt={28}>
                  <colgroup><col width={312} /><col width={112} /><col width={136} /><col width={141} /><col width={102} /><col width={92} /></colgroup>
                  <tbody>
                    <Tr><Cell colSpan={5} $bg={BLU} $b $align="center">Device Utilization Summary</Cell><Cell $bg={BLU} $align="right" $rp={4}><FoldLink>[-]</FoldLink></Cell></Tr>
                    <Tr>
                      <Cell $bg={YEL} $b>Logic Utilization</Cell><Cell $bg={YEL} $b>Used</Cell><Cell $bg={YEL} $b>Available</Cell>
                      <Cell $bg={YEL} $b>Utilization</Cell><Cell $bg={YEL} $b colSpan={2}>Note(s)</Cell>
                    </Tr>
                    {util.map(([a, pad, b, c, d], i) => (
                      <Tr key={i}>
                        <Cell $pad={pad}>{a}</Cell><Cell $align="right">{b}</Cell><Cell $align="right">{c}</Cell><Cell $align="right">{d}</Cell><Cell colSpan={2} />
                      </Tr>
                    ))}
                  </tbody>
                </Table>
              </MainBody>
              <Scroll>
                <Arrow><Ico n="up" s={14} /></Arrow>
                <Thumb $mt={1} $h={290}><Lines /></Thumb>
                <Arrow $end><Ico n="down" s={14} /></Arrow>
              </Scroll>
            </MainPane>
          </TopRow>
          <EditorTab><Ico n="sigma" s={14} /><EditorLabel>Design Summary (Programming File Generated)</EditorLabel><Ico n="close" s={15} /></EditorTab>
        </RightColumn>
      </Work>
      <ConsoleTitle>Console<Panel /></ConsoleTitle>
      <ConsoleBox>
        <ConsoleMain>
          <Gutter />
          <Pre>{`teclado/Xilinx/Teclado_PS2/webtalk.log

WebTalk is complete.

Process "Generate Programming File" completed successfully`}</Pre>
        </ConsoleMain>
        <Scroll>
          <Arrow><Ico n="up" s={14} /></Arrow>
          <Thumb $mt={49} $h={23}><Lines /></Thumb>
          <Arrow $end><Ico n="down" s={14} /></Arrow>
        </Scroll>
        <HScroll>
          <HArrow><Ico n="left" s={14} /></HArrow>
          <HThumb><VLines /></HThumb>
          <HArrow $end><Ico n="right" s={14} /></HArrow>
        </HScroll>
        <Corner />
      </ConsoleBox>
      <Tabs>
        <Tab $on $w={82} $pad={7} $gap={9}><Ico n="consoleDoc" />Console</Tab>
        <Tab $w={68} $pad={4} $gap={9}><Ico n="err" />Errors</Tab>
        <Tab $w={86} $pad={5} $gap={10}><Ico n="warn" />Warnings</Tab>
        <Tab $w={132} $pad={5} $gap={9}><Ico n="find" />Find in Files Results</Tab>
      </Tabs>
    </Frame>
  );
}
